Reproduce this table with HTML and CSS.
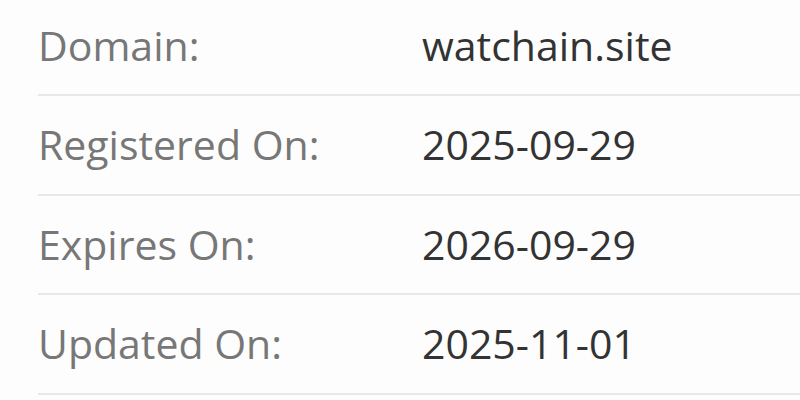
FILE: index.html
```html
<!DOCTYPE html>
<html>
<head>
<meta charset="utf-8">
<link rel="stylesheet" href="styles.css">
</head>
<body>
<div class="info">
  <div class="row"><div class="label">Domain:</div><div class="value">watchain.site</div></div>
  <div class="row"><div class="label">Registered On:</div><div class="value">2025-09-29</div></div>
  <div class="row"><div class="label">Expires On:</div><div class="value">2026-09-29</div></div>
  <div class="row"><div class="label">Updated On:</div><div class="value">2025-11-01</div></div>
</div>
</body>
</html>
```
FILE: styles.css
```css
html, body {
  margin: 0;
  padding: 0;
  background: #fdfdfd;
}
body {
  font-family: "Open Sans", sans-serif;
  font-size: 41px;
  line-height: 55px;
  overflow: hidden;
  height: 400px;
}
.info {
  margin: -3px 0 0 38px;
}
.row {
  display: grid;
  grid-template-columns: 384px 1fr;
  padding: 21px 0 21.4px;
  border-bottom: 2px solid #e8e8e8;
}
.label {
  color: #777777;
}
.value {
  color: #333333;
}
```
